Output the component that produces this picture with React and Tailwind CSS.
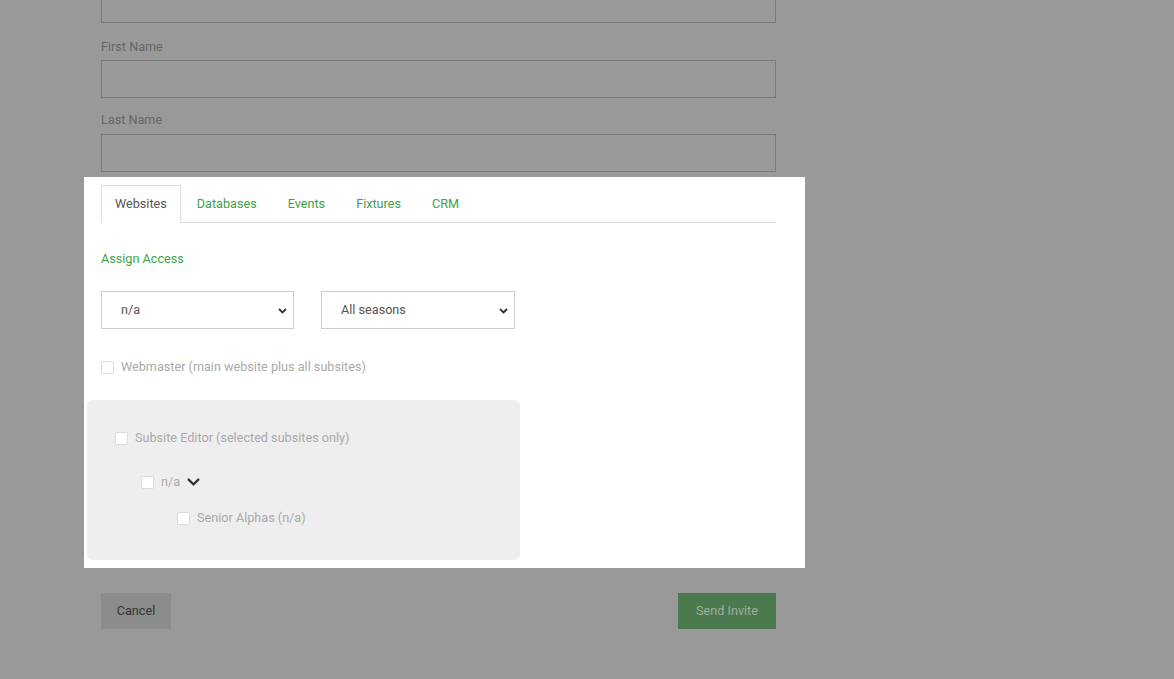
import React from "react";

function Box({ className = "" }) {
  return (
    <span
      className={
        "inline-block w-[13px] h-[13px] shrink-0 rounded-[2px] border border-[#dcdcdc] bg-white " +
        className
      }
    />
  );
}

function Select({ label, w }) {
  return (
    <div
      className={
        "relative h-[38px] border border-[#cccccc] bg-white flex items-center pl-[19px] text-[#555] " +
        w
      }
    >
      <span>{label}</span>
      <svg
        className="absolute right-[6px] top-[16px]"
        width="9"
        height="6"
        viewBox="0 0 9 6"
      >
        <path d="M1 1 L4.5 4.5 L8 1" fill="none" stroke="#333" strokeWidth="1.8" />
      </svg>
    </div>
  );
}

export default function App() {
  return (
    <div className="min-h-[679px] h-[679px] overflow-hidden bg-[#999999] font-['Roboto','Liberation_Sans',sans-serif] text-[12.65px]">
      <div className="pl-[84px] w-[805px]">
        <div className="pl-[17px] w-[692px]">
          <div className="-mt-[15px] h-[38px] border border-[#7b7b7b]" />
          <div className="mt-[14px] mb-[3px] leading-[20px] text-[#666666]">First Name</div>
          <div className="h-[38px] border border-[#7b7b7b]" />
          <div className="mt-[12px] mb-[4px] leading-[20px] text-[#666666]">Last Name</div>
          <div className="h-[38px] border border-[#7b7b7b]" />
        </div>

        <div className="mt-[5px] bg-white w-[721px] pl-[17px] pr-[29px] pt-[8px] pb-[8px]">
          <ul className="flex border-b border-[#dddddd]">
            <li className="-mb-px border border-[#dddddd] border-b-white bg-white px-[13px] py-[10px] leading-[16px] text-[#555555]">
              Websites
            </li>
            {["Databases", "Events", "Fixtures", "CRM"].map((t) => (
              <li
                key={t}
                className="-mb-px ml-px border border-transparent px-[14px] py-[10px] leading-[16px] text-[#43a047]"
              >
                {t}
              </li>
            ))}
          </ul>

          <div className="mt-[26px] leading-[20px] text-[#43a047]">Assign Access</div>

          <div className="mt-[22px] flex gap-[27px]">
            <Select label="n/a" w="w-[193px]" />
            <Select label="All seasons" w="w-[194px]" />
          </div>

          <div className="mt-[28px] flex items-center gap-[7px] leading-[20px] text-[#aaaaaa]">
            <Box />
            <span>Webmaster (main website plus all subsites)</span>
          </div>

          <div className="mt-[23px] -ml-[14px] w-[433px] rounded-[6px] bg-[#eeeeee] pl-[28px] pt-[28px] pb-[32px] text-[#aaaaaa]">
            <div className="flex items-center gap-[7px] leading-[20px]">
              <Box />
              <span>Subsite Editor (selected subsites only)</span>
            </div>
            <div className="mt-[24px] ml-[26px] flex items-center gap-[7px] leading-[20px]">
              <Box />
              <span>n/a</span>
              <svg width="13" height="10" viewBox="0 0 448 360" className="mt-[1px]">
                <path
                  transform="translate(0,-110)"
                  d="M207.029 381.476L12.686 187.132c-9.373-9.373-9.373-24.569 0-33.941l22.667-22.667c9.357-9.357 24.522-9.375 33.901-.04L224 284.505l154.745-154.021c9.379-9.335 24.544-9.317 33.901.04l22.667 22.667c9.373 9.373 9.373 24.569 0 33.941L240.971 381.476c-9.373 9.372-24.569 9.372-33.942 0z"
                  fill="#333333"
                />
              </svg>
            </div>
            <div className="mt-[16px] ml-[62px] flex items-center gap-[7px] leading-[20px]">
              <Box />
              <span>Senior Alphas (n/a)</span>
            </div>
          </div>
        </div>

        <div className="mt-[25px] pl-[17px] w-[692px] flex justify-between">
          <div className="h-[36px] w-[70px] flex items-center justify-center bg-[#8c8c8c] text-[#333333]">
            Cancel
          </div>
          <div className="h-[36px] w-[98px] flex items-center justify-center bg-[#4b7a4e] text-[#9eaf9f]">
            Send Invite
          </div>
        </div>
      </div>
    </div>
  );
}
